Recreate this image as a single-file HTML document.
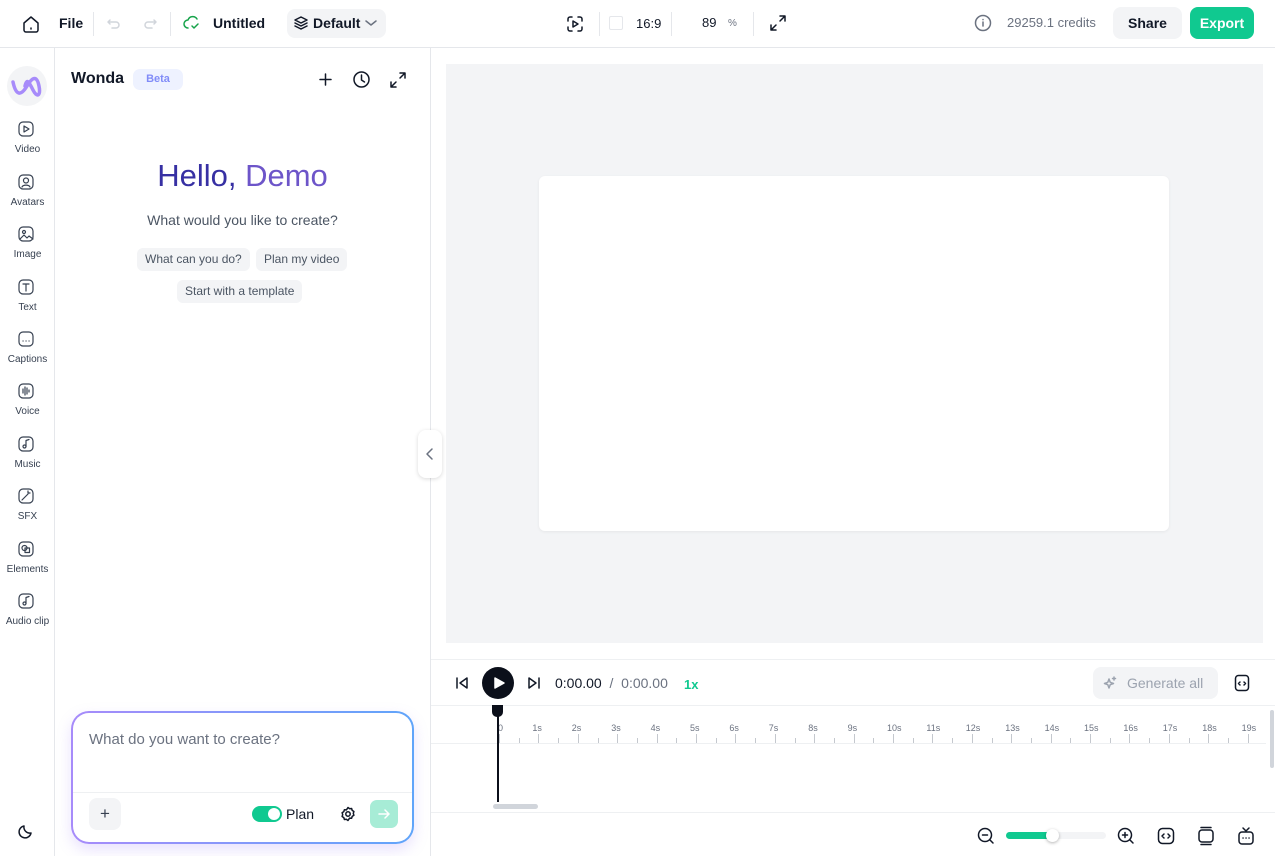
<!DOCTYPE html>
<html><head><meta charset="utf-8"><style>
*{box-sizing:border-box;margin:0;padding:0}
body{width:1275px;height:856px;overflow:hidden;background:#fff;font-family:"Liberation Sans",sans-serif;color:#111827;position:relative}
.a{position:absolute}
svg{fill:none;stroke:currentColor;stroke-width:1.5;stroke-linecap:round;stroke-linejoin:round}
.lbl{font-size:10px;color:#374151;width:55px;text-align:center;left:0}
.chip{position:absolute;background:#f3f4f6;border-radius:6px;font-size:12px;color:#4b5563;height:23px;line-height:23px;padding:0 8px}
.tk{position:absolute;font-size:9px;color:#6b7280;top:723px}
#side svg{stroke-width:1.2;color:#374151}
</style></head><body>
<div class="a" style="left:0;top:47px;width:1275px;height:1px;background:#e5e7eb"></div>
<svg class="a" style="left:21px;top:14px" width="20" height="20" viewBox="0 0 20 20"><path d="M3 9l7-6 7 6v7a2 2 0 0 1-2 2H5a2 2 0 0 1-2-2z"/><path d="M10 14v1"/></svg>
<div class="a" style="left:59px;top:15px;font-size:14px;font-weight:bold">File</div>
<div class="a" style="left:93px;top:12px;width:1px;height:24px;background:#e5e7eb"></div>
<svg class="a" style="left:106px;top:16px;color:#d1d5db" width="16" height="16" viewBox="0 0 16 16"><path d="M4 4L2 6l2 2M2 6h8a3 3 0 0 1 0 6H6"/></svg>
<svg class="a" style="left:142px;top:16px;color:#d1d5db" width="16" height="16" viewBox="0 0 16 16"><path d="M12 4l2 2-2 2M14 6H6a3 3 0 0 0 0 6h4"/></svg>
<div class="a" style="left:170px;top:12px;width:1px;height:24px;background:#e5e7eb"></div>
<svg class="a" style="left:183px;top:14px;color:#16a34a" width="20" height="18" viewBox="0 0 20 18"><path d="M5 14a4 4 0 0 1 0-8 5 5 0 0 1 9-1M9 12l2 2 4-4"/></svg>
<div class="a" style="left:213px;top:15px;font-size:14px;font-weight:bold">Untitled</div>
<div class="a" style="left:287px;top:9px;width:99px;height:29px;background:#f3f4f6;border-radius:8px"></div>
<svg class="a" style="left:293px;top:15px" width="16" height="16" viewBox="0 0 16 16"><path d="M8 2l6 3-6 3-6-3zM2 8l6 3 6-3M2 11l6 3 6-3"/></svg>
<div class="a" style="left:313px;top:15px;font-size:14px;font-weight:bold">Default</div>
<svg class="a" style="left:365px;top:18px;color:#6b7280" width="12" height="10" viewBox="0 0 12 10"><path d="M1 3l5 4 5-4"/></svg>
<svg class="a" style="left:566px;top:15px" width="18" height="18" viewBox="0 0 18 18"><path d="M2 6V4a2 2 0 0 1 2-2h2M12 2h2a2 2 0 0 1 2 2v2M16 12v2a2 2 0 0 1-2 2h-2M6 16H4a2 2 0 0 1-2-2v-2"/><path d="M7 6l5 3-5 3z"/></svg>
<div class="a" style="left:599px;top:12px;width:1px;height:24px;background:#e5e7eb"></div>
<div class="a" style="left:609px;top:16px;width:14px;height:14px;border:1px solid #e5e7eb;border-radius:2px"></div>
<div class="a" style="left:636px;top:16px;font-size:13px">16:9</div>
<div class="a" style="left:671px;top:12px;width:1px;height:24px;background:#e5e7eb"></div>
<div class="a" style="left:702px;top:15px;font-size:13px">89</div>
<div class="a" style="left:728px;top:18px;font-size:10px;color:#6b7280">%</div>
<div class="a" style="left:753px;top:12px;width:1px;height:24px;background:#e5e7eb"></div>
<svg class="a" style="left:769px;top:14px" width="18" height="18" viewBox="0 0 18 18"><path d="M11 2h5v5M16 2l-5 5M7 16H2v-5M2 16l5-5"/></svg>
<svg class="a" style="left:974px;top:14px;color:#6b7280" width="18" height="18" viewBox="0 0 18 18"><circle cx="9" cy="9" r="7.5"/><path d="M9 8v4M9 5.5v.1"/></svg>
<div class="a" style="left:1007px;top:15px;font-size:13px;color:#6b7280">29259.1 credits</div>
<div class="a" style="left:1113px;top:7px;width:69px;height:32px;background:#f3f4f6;border-radius:8px;font-size:14px;font-weight:bold;text-align:center;line-height:32px">Share</div>
<div class="a" style="left:1190px;top:7px;width:64px;height:32px;background:#10c990;border-radius:8px;font-size:14px;font-weight:bold;color:#fff;text-align:center;line-height:32px">Export</div>

<div class="a" style="left:54px;top:48px;width:1px;height:808px;background:#e5e7eb"></div>
<div class="a" style="left:7px;top:66px;width:40px;height:40px;border-radius:50%;background:#f3f4f6"></div>
<svg class="a" style="left:11px;top:74px" width="34" height="26" viewBox="0 0 34 26"><path d="M2 8c3 14 8 14 14 4s10-10 12 0-2 12-6 4S16 4 14 12" stroke="#a78bfa" stroke-width="3.5"/></svg>
<div id="side"></div>
<svg class="a" style="left:18px;top:823px" width="16" height="16" viewBox="0 0 16 16"><path d="M13 10A6 6 0 0 1 6 3a6 6 0 1 0 7 7z"/></svg>

<div class="a" style="left:430px;top:48px;width:1px;height:808px;background:#e5e7eb"></div>
<div class="a" style="left:71px;top:70px;font-size:16px;font-weight:bold">Wonda</div>
<div class="a" style="left:133px;top:69px;width:50px;height:21px;background:#eef2ff;border-radius:7px;color:#818cf8;font-size:11px;font-weight:bold;text-align:center;line-height:21px">Beta</div>
<svg class="a" style="left:318px;top:72px" width="15" height="15" viewBox="0 0 15 15"><path d="M7.5 2v11M2 7.5h11"/></svg>
<svg class="a" style="left:352px;top:70px" width="19" height="19" viewBox="0 0 19 19"><circle cx="9.5" cy="9.5" r="7.5"/><path d="M9.5 5v5l3 2"/></svg>
<svg class="a" style="left:389px;top:71px" width="18" height="18" viewBox="0 0 18 18"><path d="M11 2h5v5M16 2l-5 5M7 16H2v-5M2 16l5-5"/></svg>
<div class="a" style="left:55px;top:158px;width:375px;text-align:center;font-size:31px;color:#4338ca"><span style="color:#3730a3">Hello,</span> <span style="color:#6d55c9">Demo</span></div>
<div class="a" style="left:55px;top:212px;width:375px;text-align:center;font-size:14px;color:#4b5563">What would you like to create?</div>
<div class="chip" style="left:137px;top:248px">What can you do?</div>
<div class="chip" style="left:256px;top:248px">Plan my video</div>
<div class="chip" style="left:177px;top:280px">Start with a template</div>
<div class="a" style="left:418px;top:430px;width:24px;height:48px;background:#fff;border-radius:8px;box-shadow:0 1px 4px rgba(0,0,0,.15)"></div>
<svg class="a" style="left:424px;top:447px;color:#6b7280" width="12" height="14" viewBox="0 0 12 14"><path d="M8 2L3 7l5 5"/></svg>
<div class="a" style="left:71px;top:711px;width:343px;height:133px;border-radius:18px;background:linear-gradient(90deg,#a78bfa,#60a5fa);padding:2px;box-shadow:0 6px 14px rgba(167,139,250,.25)"><div style="width:100%;height:100%;background:#fff;border-radius:16px"></div></div>
<div class="a" style="left:89px;top:731px;font-size:15px;color:#6b7280">What do you want to create?</div>
<div class="a" style="left:73px;top:792px;width:339px;height:1px;background:#eef0f2"></div>
<div class="a" style="left:89px;top:798px;width:32px;height:32px;background:#f3f4f6;border-radius:8px;text-align:center;line-height:31px;font-size:17px;color:#374151">+</div>
<div class="a" style="left:252px;top:806px;width:30px;height:16px;background:#10c990;border-radius:8px"><div style="position:absolute;right:2px;top:2px;width:12px;height:12px;background:#fff;border-radius:50%"></div></div>
<div class="a" style="left:286px;top:806px;font-size:14px;font-weight:500">Plan</div>
<svg class="a" style="left:340px;top:806px" width="16" height="16" viewBox="0 0 16 16"><circle cx="8" cy="8" r="2.2"/><path d="M8 1.5l1.6 1.2 2-.2.6 1.9 1.7 1.1-.6 1.9.6 1.9-1.7 1.1-.6 1.9-2-.2L8 14.5l-1.6-1.2-2 .2-.6-1.9-1.7-1.1.6-1.9-.6-1.9 1.7-1.1.6-1.9 2 .2z"/></svg>
<div class="a" style="left:370px;top:800px;width:28px;height:28px;background:#a7ecd6;border-radius:7px"></div>
<svg class="a" style="left:377px;top:807px;color:#fff" width="14" height="14" viewBox="0 0 14 14"><path d="M2 7h10M8 3l4 4-4 4"/></svg>

<div class="a" style="left:446px;top:64px;width:817px;height:579px;background:#f3f4f6"></div>
<div class="a" style="left:539px;top:176px;width:630px;height:355px;background:#fff;border-radius:6px;box-shadow:0 1px 3px rgba(0,0,0,.06)"></div>
<div class="a" style="left:431px;top:659px;width:844px;height:1px;background:#eef0f2"></div>
<svg class="a" style="left:454px;top:675px" width="16" height="16" viewBox="0 0 16 16"><path d="M3 3v10M13 3L6 8l7 5z"/></svg>
<div class="a" style="left:482px;top:667px;width:32px;height:32px;background:#0b0f1a;border-radius:50%"></div>
<svg class="a" style="left:492px;top:676px" width="14" height="14" viewBox="0 0 14 14"><path d="M3 2l9 5-9 5z" fill="#fff" stroke="#fff"/></svg>
<svg class="a" style="left:526px;top:675px" width="16" height="16" viewBox="0 0 16 16"><path d="M13 3v10M3 3l7 5-7 5z"/></svg>
<div class="a" style="left:555px;top:675px;font-size:14px">0:00.00 <span style="color:#6b7280">&nbsp;/&nbsp; 0:00.00</span></div>
<div class="a" style="left:684px;top:677px;font-size:13px;color:#10c990;font-weight:bold">1x</div>
<div class="a" style="left:1093px;top:667px;width:125px;height:32px;background:#f3f4f6;border-radius:8px;color:#9ca3af;font-size:14px;line-height:32px;padding-left:34px">Generate all</div>
<svg class="a" style="left:1103px;top:676px;color:#9ca3af" width="15" height="15" viewBox="0 0 15 15"><path d="M6 3l1.2 3.3L10.5 7.5 7.2 8.7 6 12 4.8 8.7 1.5 7.5l3.3-1.2zM11 1v3M9.5 2.5h3" /></svg>
<svg class="a" style="left:1234px;top:674px" width="16" height="18" viewBox="0 0 16 18"><rect x="1.5" y="1.5" width="13" height="15" rx="3"/><path d="M6 8l-1.5 1.5L6 11M10 8l1.5 1.5L10 11"/></svg>
<div class="a" style="left:431px;top:705px;width:844px;height:1px;background:#eef0f2"></div>
<div id="ruler"></div>
<div class="a" style="left:431px;top:743px;width:835px;height:1px;background:#eef0f2"></div>
<div class="a" style="left:1270px;top:710px;width:4px;height:58px;background:#d1d5db;border-radius:2px"></div>
<div class="a" style="left:492px;top:705px;width:11px;height:12px;background:#0b0f1a;border-radius:0 0 5px 5px"></div>
<div class="a" style="left:497px;top:710px;width:2px;height:92px;background:#0b0f1a"></div>
<div class="a" style="left:493px;top:804px;width:45px;height:5px;background:#d1d5db;border-radius:3px"></div>
<div class="a" style="left:431px;top:812px;width:844px;height:1px;background:#eef0f2"></div>
<svg class="a" style="left:977px;top:827px" width="18" height="18" viewBox="0 0 18 18"><circle cx="8" cy="8" r="6.5"/><path d="M5.5 8h5M13 13l3 3"/></svg>
<div class="a" style="left:1006px;top:832px;width:100px;height:7px;background:#f3f4f6;border-radius:4px"><div style="width:47px;height:7px;background:#10c990;border-radius:4px"></div></div>
<div class="a" style="left:1046px;top:829px;width:13px;height:13px;background:#fff;border-radius:50%;box-shadow:0 1px 3px rgba(0,0,0,.3)"></div>
<svg class="a" style="left:1117px;top:827px" width="18" height="18" viewBox="0 0 18 18"><circle cx="8" cy="8" r="6.5"/><path d="M5.5 8h5M8 5.5v5M13 13l3 3"/></svg>
<svg class="a" style="left:1157px;top:827px" width="18" height="18" viewBox="0 0 18 18"><rect x="1.5" y="1.5" width="15" height="15" rx="4"/><path d="M7 7l-2 2 2 2M11 7l2 2-2 2"/></svg>
<svg class="a" style="left:1197px;top:826px" width="18" height="20" viewBox="0 0 18 20"><rect x="2" y="4" width="14" height="12" rx="3"/><path d="M4 1.5h10M4 18.5h10"/></svg>
<svg class="a" style="left:1237px;top:826px" width="18" height="20" viewBox="0 0 18 20"><rect x="2" y="6" width="14" height="12" rx="3"/><path d="M6 2l3 3 3-3M6 12h.1M9 12h.1M12 12h.1"/></svg>
<script>
var s='',L=[['Video',149],['Avatars',202],['Image',254],['Text',307],['Captions',359],['Voice',411],['Music',464],['SFX',516],['Elements',569],['Audio clip',621]];
var ic=['<rect x="2" y="2" width="14" height="14" rx="4"/><path d="M7 6l5 3-5 3z"/>','<rect x="2" y="2" width="14" height="14" rx="4"/><circle cx="9" cy="7.5" r="2.5"/><path d="M5 14c1-2.5 7-2.5 8 0"/>','<rect x="2" y="2" width="14" height="14" rx="4"/><circle cx="7" cy="7" r="1.5"/><path d="M3 14l4-4 3 3 2-2 4 3"/>','<rect x="2" y="2" width="14" height="14" rx="4"/><path d="M6 6h6M9 6v7"/>','<rect x="2" y="2" width="14" height="14" rx="4"/><path d="M6 11h.1M9 11h.1M12 11h.1"/>','<rect x="2" y="2" width="14" height="14" rx="4"/><path d="M6 7v4M8 5v8M10 6v6M12 8v2"/>','<rect x="2" y="2" width="14" height="14" rx="4"/><circle cx="7.5" cy="11.5" r="1.5"/><path d="M9 11.5V5.5l3-1"/>','<rect x="2" y="2" width="14" height="14" rx="4"/><path d="M5 13l6-6M11 4v2M13 6h-2"/>','<rect x="2" y="2" width="14" height="14" rx="4"/><circle cx="7.5" cy="8" r="2.5"/><rect x="8" y="8" width="4.5" height="4.5"/>','<rect x="2" y="2" width="14" height="14" rx="4"/><circle cx="7.5" cy="11.5" r="1.5"/><path d="M9 11.5V5.5l3-1"/>'];
L.forEach(function(l,i){s+='<svg class="a" style="left:17px;top:'+(l[1]-29)+'px" width="18" height="18" viewBox="0 0 18 18">'+ic[i]+'</svg><div class="a lbl" style="top:'+(l[1]-5)+'px">'+l[0]+'</div>';});
document.getElementById('side').innerHTML=s;
var r='';for(var i=0;i<=38;i++){var x=499+i*19.7;var maj=i%2==0;r+='<div class="a" style="left:'+x.toFixed(1)+'px;top:'+(maj?734:738)+'px;width:1px;height:'+(maj?9:5)+'px;background:#c4c8ce"></div>';if(maj){r+='<div class="tk" style="left:'+(x-(i?6:1)).toFixed(1)+'px">'+(i?(i/2)+'s':'0')+'</div>';}}
document.getElementById('ruler').innerHTML=r;
</script>
</body></html>
